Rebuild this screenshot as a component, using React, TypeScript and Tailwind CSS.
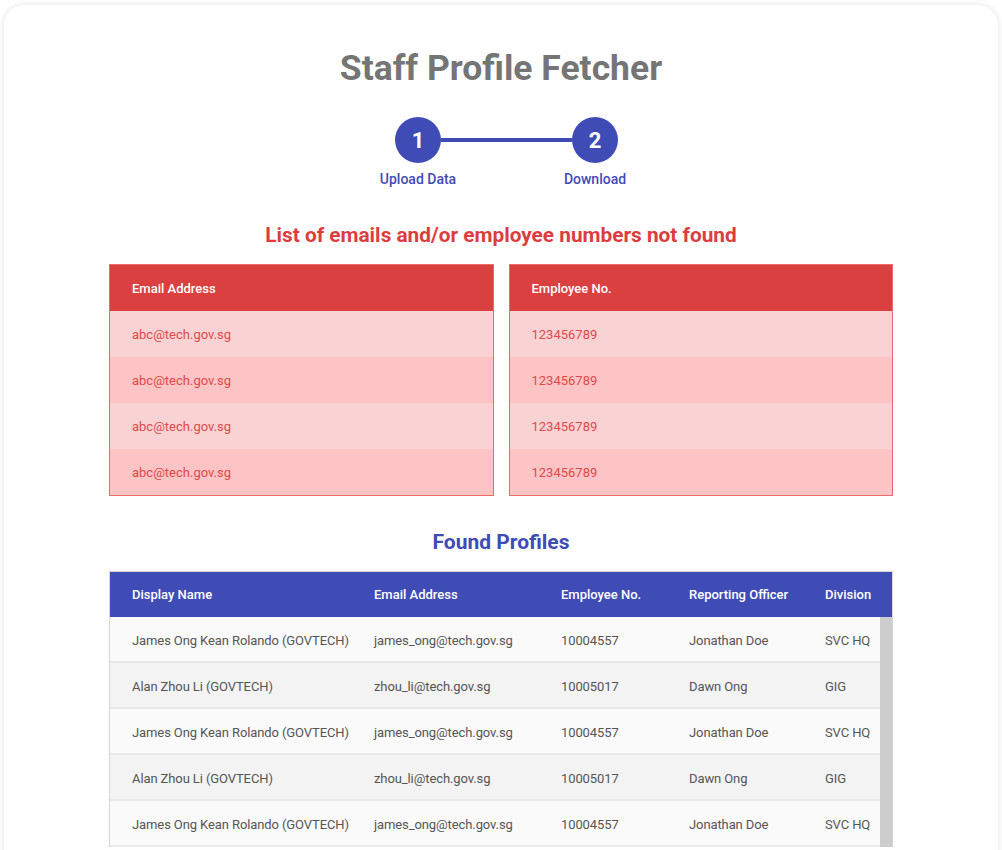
const emails = ["abc@tech.gov.sg", "abc@tech.gov.sg", "abc@tech.gov.sg", "abc@tech.gov.sg"];
const empNos = ["123456789", "123456789", "123456789", "123456789"];

const profiles = [
  { name: "James Ong Kean Rolando (GOVTECH)", email: "james_ong@tech.gov.sg", no: "10004557", officer: "Jonathan Doe", division: "SVC HQ" },
  { name: "Alan Zhou Li (GOVTECH)", email: "zhou_li@tech.gov.sg", no: "10005017", officer: "Dawn Ong", division: "GIG" },
  { name: "James Ong Kean Rolando (GOVTECH)", email: "james_ong@tech.gov.sg", no: "10004557", officer: "Jonathan Doe", division: "SVC HQ" },
  { name: "Alan Zhou Li (GOVTECH)", email: "zhou_li@tech.gov.sg", no: "10005017", officer: "Dawn Ong", division: "GIG" },
  { name: "James Ong Kean Rolando (GOVTECH)", email: "james_ong@tech.gov.sg", no: "10004557", officer: "Jonathan Doe", division: "SVC HQ" },
];

function Step({ n, label }: { n: number; label: string }) {
  return (
    <div className="flex w-[100px] flex-col items-center">
      <div className="flex h-[46px] w-[46px] items-center justify-center rounded-full bg-[#3f4cb5] text-[22px] font-bold text-white">
        {n}
      </div>
      <div className="mt-[6px] text-[14px] font-medium text-[#3f4cb5]">{label}</div>
    </div>
  );
}

function NotFoundTable({ title, rows }: { title: string; rows: string[] }) {
  return (
    <div className="flex-1 border border-[#ee6a6a]">
      <div className="flex h-[46px] items-center bg-[#da4040] px-[22px] pt-[2px] text-[13px] font-medium text-white">{title}</div>
      {rows.map((r, i) => (
        <div
          key={i}
          className={`flex h-[46px] items-center px-[22px] pt-[2px] text-[13px] text-[#e0484d] ${i % 2 === 0 ? "bg-[#f9d3d3]" : "bg-[#fcc4c4]"}`}
        >
          {r}
        </div>
      ))}
    </div>
  );
}

export default function App() {
  return (
    <div className="min-h-screen bg-white px-[4px] pt-[5px] font-['Roboto','Liberation_Sans',sans-serif]">
      <div className="h-[900px] rounded-[20px] bg-white shadow-[0_0_6px_rgba(0,0,0,0.12)]">
        <div className="mx-auto flex w-[784px] flex-col items-center pt-[42px]">
          <h1 className="text-[35.5px] font-bold leading-[42px] text-[#757575]">Staff Profile Fetcher</h1>

          <div className="mt-[28px] flex pl-[11px]">
            <Step n={1} label="Upload Data" />
            <div className="z-10 mx-[-27px] mt-[21px] h-[4px] w-[131px] bg-[#3f4cb5]" />
            <Step n={2} label="Download" />
          </div>

          <h2 className="mt-[33px] text-[20.8px] font-bold leading-[24px] text-[#dc3d3f]">
            List of emails and/or employee numbers not found
          </h2>

          <div className="mt-[17px] flex w-full gap-[15px]">
            <NotFoundTable title="Email Address" rows={emails} />
            <NotFoundTable title="Employee No." rows={empNos} />
          </div>

          <h2 className="mt-[34px] text-[21px] font-bold leading-[24px] text-[#3f4cb5]">Found Profiles</h2>

          <div className="mt-[17px] w-full border-x border-t border-[#d6d6d6]">
            <div className="grid h-[45px] grid-cols-[242px_187px_128px_136px_1fr] items-center whitespace-nowrap bg-[#3f4cb5] pt-[1px] text-[13px] font-medium text-white">
              <div className="pl-[22px]">Display Name</div>
              <div className="pl-[22px]">Email Address</div>
              <div className="pl-[22px]">Employee No.</div>
              <div className="pl-[22px]">Reporting Officer</div>
              <div className="pl-[22px]">Division</div>
            </div>
            <div className="flex">
              <div className="flex-1">
                {profiles.map((p, i) => (
                  <div
                    key={i}
                    className={`grid h-[46px] grid-cols-[242px_187px_128px_136px_1fr] items-center whitespace-nowrap border-b-2 border-[#e9e9e9] pt-[3px] text-[13px] tracking-[-0.1px] text-[#555555] ${i % 2 === 0 ? "bg-[#fafafa]" : "bg-[#f3f3f3]"}`}
                  >
                    <div className="pl-[22px]">{p.name}</div>
                    <div className="pl-[22px]">{p.email}</div>
                    <div className="pl-[22px]">{p.no}</div>
                    <div className="pl-[22px]">{p.officer}</div>
                    <div className="pl-[22px]">{p.division}</div>
                  </div>
                ))}
              </div>
              <div className="w-[12px] bg-[#cdcdcd]" />
            </div>
          </div>
        </div>
      </div>
    </div>
  );
}
